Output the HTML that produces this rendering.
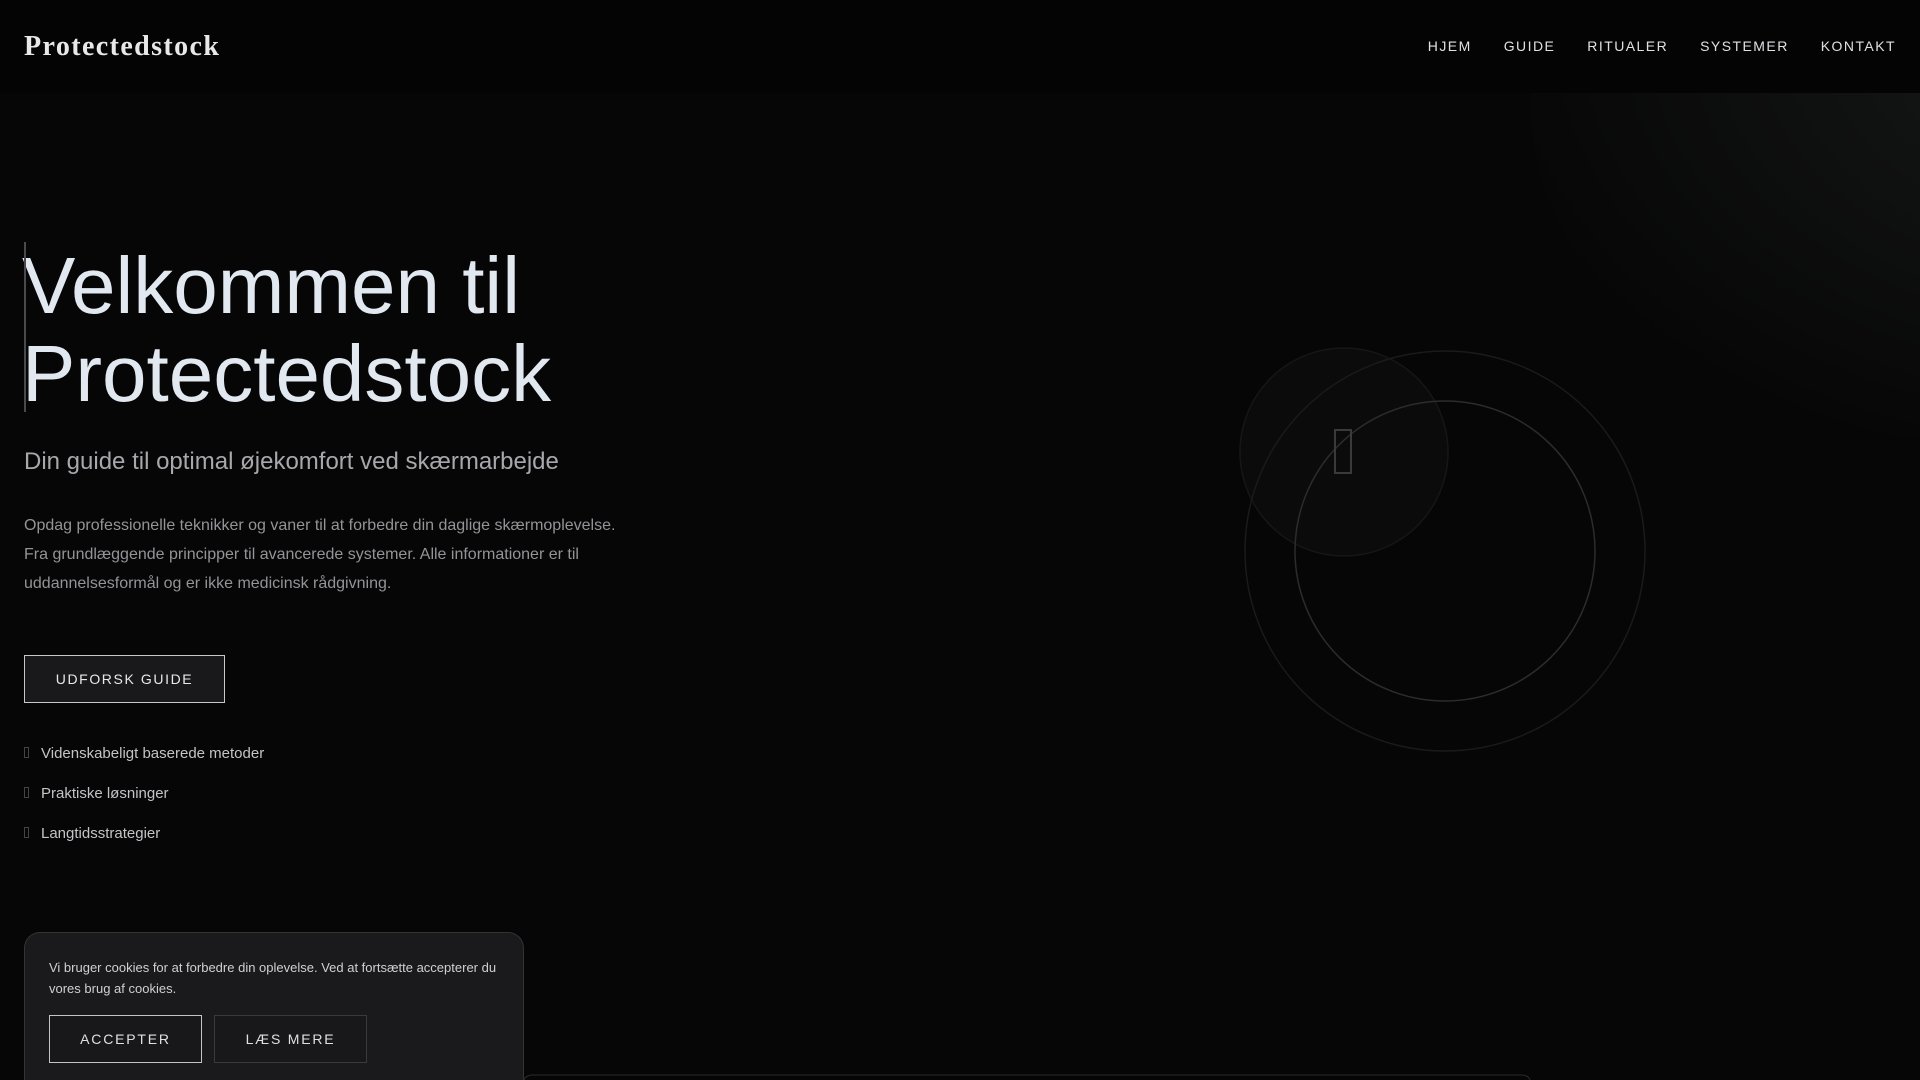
<!DOCTYPE html>
<html><head><meta charset="utf-8"><style>
*{margin:0;padding:0;box-sizing:border-box}
html,body{width:1920px;height:1080px;overflow:hidden;background:#060606;font-family:"Liberation Sans",Arial,sans-serif;position:relative}
header{position:absolute;left:0;top:0;width:1920px;height:93px;background:#040404;z-index:3}
.logo{position:absolute;left:24px;top:31px;font-family:"Liberation Serif",serif;font-weight:bold;font-size:28px;letter-spacing:1.4px;color:#e8e8ea}
nav{position:absolute;right:24px;top:38px;display:flex;gap:32px}
nav span{font-size:14px;letter-spacing:1.45px;color:#e0e0e4}
.glow{position:absolute;left:1530px;top:-240px;width:860px;height:680px;border-radius:50%;background:radial-gradient(ellipse at 70% 40%,#191b1b 0%,#101111 35%,#080808 70%,#060606 78%,rgba(6,6,6,0) 80%)}
h1{position:absolute;left:22px;top:242px;font-weight:normal;font-size:80px;line-height:88px;color:#e2e8f0;width:700px;height:170px}
h1:before{content:"";position:absolute;left:2px;top:0;width:2px;height:170px;background:#4a4a4e}
.sub{position:absolute;left:24px;top:448px;font-size:24px;color:#a8a8ac}
.p{position:absolute;left:24px;top:511px;width:600px;font-size:16px;line-height:29px;color:#949498}
.btn{position:absolute;left:24px;top:655px;width:201px;height:48px;border:1px solid #c8c8cc;background:#19191b;color:#e8e8ea;font-size:14px;letter-spacing:1.6px;display:flex;align-items:center;justify-content:center}
.li{position:absolute;left:24px;font-size:15px;color:#c4c4c8}
.li i{position:absolute;left:0;top:2px;width:5px;height:11px;border:1px solid #444}
.li span{margin-left:17px}
.cookie{position:absolute;left:24px;top:932px;width:500px;height:148px;background:#1a1a1c;border:1px solid #333336;border-bottom:none;border-radius:16px 16px 0 0;z-index:5}
.cookie p{position:absolute;left:24px;top:25px;width:450px;font-size:13px;line-height:20.5px;color:#d0d0d4}
.cb{position:absolute;top:82px;width:153px;height:48px;display:flex;align-items:center;justify-content:center;font-size:14px;letter-spacing:1.8px;color:#e0e0e4;background:#18181a}
</style></head><body>
<div class="glow"></div>
<header><div class="logo">Protectedstock</div>
<nav><span>HJEM</span><span>GUIDE</span><span>RITUALER</span><span>SYSTEMER</span><span>KONTAKT</span></nav></header>
<h1>Velkommen til<br>Protectedstock</h1>
<div class="sub">Din guide til optimal øjekomfort ved skærmarbejde</div>
<div class="p">Opdag professionelle teknikker og vaner til at forbedre din daglige skærmoplevelse. Fra grundlæggende principper til avancerede systemer. Alle informationer er til uddannelsesformål og er ikke medicinsk rådgivning.</div>
<div class="btn">UDFORSK GUIDE</div>
<div class="li" style="top:745px"><i></i><span>Videnskabeligt baserede metoder</span></div>
<div class="li" style="top:785px"><i></i><span>Praktiske løsninger</span></div>
<div class="li" style="top:825px"><i></i><span>Langtidsstrategier</span></div>
<svg style="position:absolute;left:0;top:0" width="1920" height="1080">
<circle cx="1344" cy="452" r="104" fill="#0b0b0b" stroke="#161616" stroke-width="1.5"/>
<circle cx="1445" cy="551" r="200" fill="none" stroke="#1a1a1a" stroke-width="1.5"/>
<circle cx="1445" cy="551" r="150" fill="none" stroke="#2c2c2e" stroke-width="1.5"/>
<rect x="1335" y="430" width="16" height="43" fill="none" stroke="#3a3a3a" stroke-width="2"/>
<path d="M523 1085 V1085 Q523 1075 533 1075 H1521 Q1531 1075 1531 1085" fill="none" stroke="#2a2a2c"/>
</svg>
<div class="cookie"><p>Vi bruger cookies for at forbedre din oplevelse. Ved at fortsætte accepterer du vores brug af cookies.</p>
<div class="cb" style="left:24px;border:1px solid #c4c4c8">ACCEPTER</div>
<div class="cb" style="left:189px;border:1px solid #3a3a3e">LÆS MERE</div></div>
</body></html>
